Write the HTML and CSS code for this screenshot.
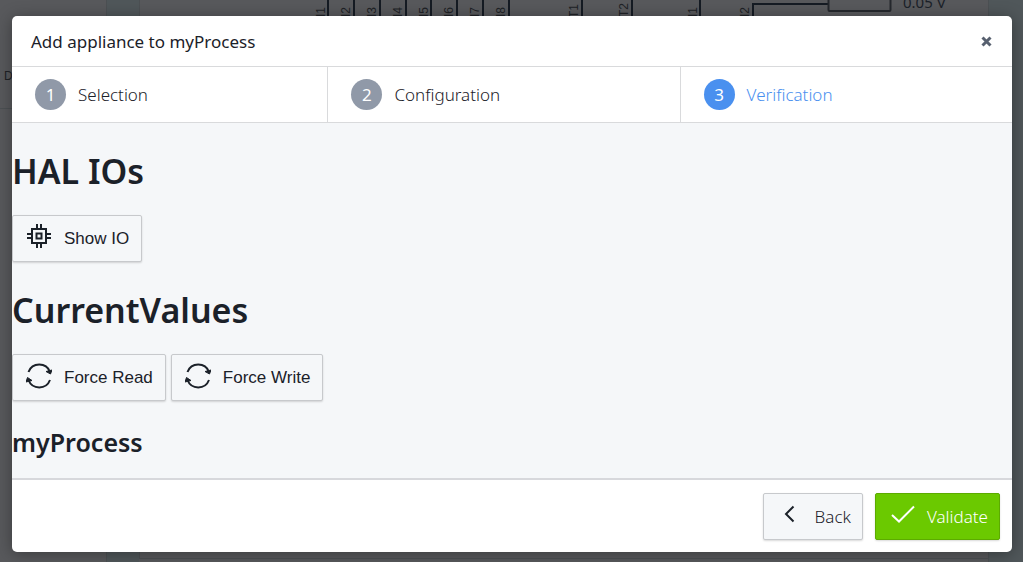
FILE: index.html
```html
<!DOCTYPE html>
<html lang="en">
<head>
<meta charset="utf-8">
<meta name="viewport" content="width=device-width, initial-scale=1">
<title>Add appliance to myProcess</title>
<link rel="stylesheet" href="styles.css">
</head>
<body>
<svg class="diagram" aria-hidden="true">
  <rect class="band" x="106" y="0" width="33" height="100%"/>
  <rect class="band" x="989" y="0" width="34" height="100%"/>
  <path class="rule" d="M106.500 0V562M139.500 0V558M988.500 0V562M0 108.500H12M139 558.500H988"/>
  <path class="wire" d="M328 0V20M354 0V20M380 0V20M406 0V20M431 0V20M457 0V20M483 0V20M509 0V20M582 0V20M632 0V20M700 0V20M753 20V4H828"/>
  <rect class="part" x="828.500" y="-12" width="62" height="23" rx="1"/>
  <g class="pin">
    <text transform="translate(325 17) rotate(-90)">I1</text>
    <text transform="translate(350 17) rotate(-90)">I2</text>
    <text transform="translate(376 17) rotate(-90)">I3</text>
    <text transform="translate(402 17) rotate(-90)">I4</text>
    <text transform="translate(428 17) rotate(-90)">I5</text>
    <text transform="translate(453 17) rotate(-90)">I6</text>
    <text transform="translate(479 17) rotate(-90)">I7</text>
    <text transform="translate(505 17) rotate(-90)">I8</text>
    <text transform="translate(578 18) rotate(-90)">T1</text>
    <text transform="translate(628 17) rotate(-90)">T2</text>
    <text transform="translate(697 17) rotate(-90)">I1</text>
    <text transform="translate(749 17) rotate(-90)">I2</text>
    <text x="4" y="80">D</text>
  </g>
  <text class="reading" x="903" y="8">0.05 V</text>
</svg>

<div class="overlay">
  <section class="modal" role="dialog" aria-modal="true" aria-labelledby="modal-title">
    <header class="modal-header">
      <h2 class="modal-title" id="modal-title">Add appliance to myProcess</h2>
      <button class="close" type="button" aria-label="Close">
        <svg width="11" height="11" viewBox="0 0 11 11"><path d="M1.500 1.500L9.500 9.500M9.500 1.500L1.500 9.500"/></svg>
      </button>
    </header>
    <ol class="steps">
      <li class="step"><span class="step-number">1</span><span>Selection</span></li>
      <li class="step"><span class="step-number">2</span><span>Configuration</span></li>
      <li class="step step-active" aria-current="step"><span class="step-number">3</span><span>Verification</span></li>
    </ol>
    <main class="content">
      <h1 class="section-title">HAL IOs</h1>
      <div class="actions">
        <button class="button" type="button">
          <svg class="icon" viewBox="0 0 26 26"><path d="M6 5H20V19H6ZM10.500 9.500H15.500V14.500H10.500ZM11 0V5M15 0V5M11 19V24M15 19V24M1 10H6M1 14H6M20 10H25M20 14H25"/></svg>
          <span>Show IO</span>
        </button>
      </div>
      <h1 class="section-title">CurrentValues</h1>
      <div class="actions">
        <button class="button" type="button">
          <svg class="icon" viewBox="0 0 26 26"><path d="M2.500 9A11.500 11.500 0 0 1 24 9M24 17A11.500 11.500 0 0 1 2.500 17"/><path class="arrow" d="M20 8.500L26 7L24.500 11ZM6 17.500L0 19L1.500 14.500Z"/></svg>
          <span>Force Read</span>
        </button>
        <button class="button" type="button">
          <svg class="icon" viewBox="0 0 26 26"><path d="M2.500 9A11.500 11.500 0 0 1 24 9M24 17A11.500 11.500 0 0 1 2.500 17"/><path class="arrow" d="M20 8.500L26 7L24.500 11ZM6 17.500L0 19L1.500 14.500Z"/></svg>
          <span>Force Write</span>
        </button>
      </div>
      <h2 class="process-title">myProcess</h2>
    </main>
    <footer class="modal-footer">
      <button class="button button-text" type="button">
        <svg class="icon icon-back" viewBox="0 0 26 26"><path d="M16.500 5.500L9 13L16.500 20.500"/></svg>
        <span>Back</span>
      </button>
      <button class="button button-text button-primary" type="button">
        <svg class="icon" viewBox="0 0 26 26"><path d="M3 14L10 20.500L25 5.500"/></svg>
        <span>Validate</span>
      </button>
    </footer>
  </section>
</div>
</body>
</html>
```
FILE: styles.css
```css
* {
  box-sizing: border-box;
}

body {
  margin: 0;
  height: 100vh;
  overflow: hidden;
  background: #58595c;
  color: #1b2129;
  font-family: "Segoe UI", "Noto Sans", sans-serif;
}

.diagram {
  position: absolute;
  inset: 0;
  width: 100%;
  height: 100%;
}

.band {
  fill: #50575a;
}

.rule {
  fill: none;
  stroke: #4c5053;
}

.wire {
  fill: none;
  stroke: #151b23;
  stroke-width: 2;
}

.part {
  fill: none;
  stroke: #25282d;
  stroke-width: 2;
}

.pin {
  fill: #202226;
  font: 12px "Liberation Sans", sans-serif;
}

.reading {
  fill: #1b2129;
  font: 15px "Segoe UI", "Noto Sans", sans-serif;
}

.overlay {
  position: relative;
  display: flex;
  height: 100%;
  padding: 16px 11px 10px 12px;
}

.modal {
  display: flex;
  flex: 1;
  flex-direction: column;
  overflow: hidden;
  border-radius: 5px;
  background: #fff;
  box-shadow: 0 2px 16px rgb(0 0 0 / 35%);
}

.modal-header {
  display: flex;
  align-items: center;
  justify-content: space-between;
  height: 51px;
  padding: 0 18px 0 19px;
  border-bottom: 1px solid #d9dadc;
}

.modal-title {
  margin: 0;
  font-size: 17px;
  font-weight: 400;
}

.close {
  display: flex;
  padding: 2px;
  border: 0;
  background: none;
}

.close svg {
  fill: none;
  stroke: #57606f;
  stroke-width: 3;
}

.steps {
  display: flex;
  margin: 0;
  padding: 0;
  border-bottom: 1px solid #d9dadc;
  list-style: none;
  font-size: 17px;
  font-weight: 300;
}

.step {
  display: flex;
  flex: 1 1 auto;
  align-items: center;
  gap: 12px;
  height: 55px;
  padding: 0 23px;
  border-right: 1px solid #d9dadc;
}

.step:last-child {
  border-right: 0;
}

.step-number {
  display: grid;
  place-items: center;
  width: 31px;
  height: 31px;
  border-radius: 50%;
  background: #9099a8;
  color: #fff;
  font-weight: 400;
}

.step-active {
  color: #4a90ef;
}

.step-active .step-number {
  background: #4a90ef;
}

.content {
  flex: 1;
  min-height: 0;
  overflow: hidden;
  background: #f5f7f9;
}

.section-title {
  margin: 24px 0 19px;
  font-size: 34px;
  font-weight: 600;
  line-height: 49px;
}

.process-title {
  margin: 24px 0;
  font-size: 25px;
  font-weight: 600;
  line-height: 34px;
}

.actions {
  display: flex;
  gap: 5px;
}

.button {
  display: flex;
  align-items: center;
  gap: 12px;
  height: 47px;
  padding: 0 12px 0 13px;
  border: 1px solid #c7c9cc;
  border-radius: 2px;
  background: #f5f7f9;
  box-shadow: 0 1px 2px rgb(0 0 0 / 15%);
  color: #1b2129;
  font: 17px "Liberation Sans", sans-serif;
}

.icon {
  width: 26px;
  height: 26px;
  margin-bottom: 4px;
  fill: none;
  stroke: currentColor;
  stroke-width: 2;
}

.icon .arrow {
  fill: currentColor;
  stroke-width: 1;
}

.modal-footer {
  display: flex;
  align-items: center;
  justify-content: flex-end;
  gap: 12px;
  height: 74px;
  padding: 0 12px;
  border-top: 2px solid #d7d8dc;
}

.button-text {
  padding-right: 11px;
  font: 300 17px "Segoe UI", "Noto Sans", sans-serif;
}

.button-primary {
  border-color: #5cab00;
  background: #6bc900;
  color: #fff;
}
```
